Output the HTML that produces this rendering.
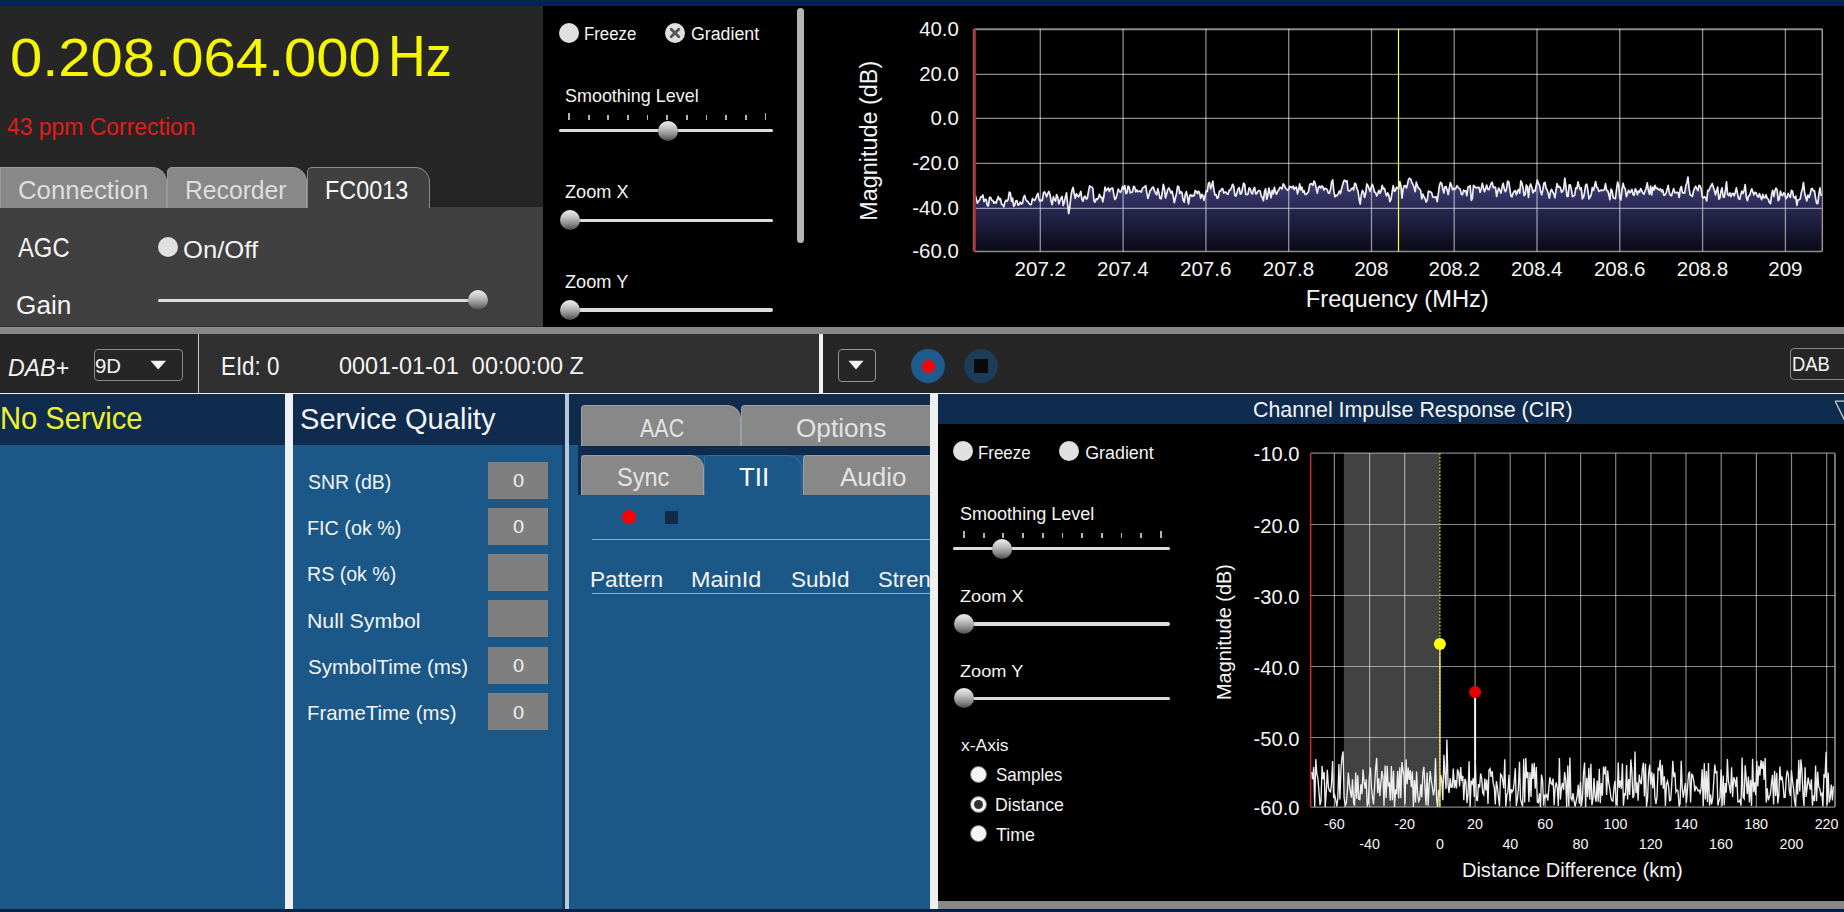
<!DOCTYPE html>
<html><head><meta charset="utf-8"><style>
html,body{margin:0;padding:0;}
body{width:1844px;height:912px;position:relative;overflow:hidden;background:#000;font-family:"Liberation Sans", sans-serif;}
.t{position:absolute;white-space:nowrap;line-height:1;transform-origin:0 0;}
.r{position:absolute;box-sizing:content-box;}
</style></head><body>
<div class="r" style="left:0px;top:0px;width:1844px;height:6px;background:#012258;"></div>
<div class="r" style="left:0px;top:0px;width:1844px;height:2px;background:#04283c;"></div>
<div class="r" style="left:0px;top:6px;width:543px;height:320px;background:#262626;"></div>
<div class="r" style="left:543px;top:6px;width:1301px;height:321px;background:#000;"></div>
<div class="r" style="left:0px;top:326px;width:543px;height:1px;background:#333;"></div>
<div class="r" style="left:0px;top:327px;width:1844px;height:7px;background:#888;"></div>
<div class="r" style="left:0px;top:334px;width:198px;height:59px;background:#262626;"></div>
<div class="r" style="left:198px;top:334px;width:621px;height:59px;background:#303030;"></div>
<div class="r" style="left:823px;top:334px;width:1021px;height:59px;background:#262626;"></div>
<div class="r" style="left:198px;top:334px;width:1px;height:59px;background:#c8c8c8;"></div>
<div class="r" style="left:819px;top:334px;width:4px;height:59px;background:#f0f0f0;"></div>
<div class="r" style="left:0px;top:393px;width:1844px;height:1px;background:#e6eef6;"></div>
<div class="r" style="left:0px;top:394px;width:1844px;height:518px;background:#1b5887;"></div>
<div class="r" style="left:0px;top:394px;width:285px;height:51px;background:#0f2b4e;"></div>
<div class="r" style="left:293px;top:394px;width:272px;height:51px;background:#0f2b4e;"></div>
<div class="r" style="left:285px;top:394px;width:8px;height:515px;background:#eef0f4;"></div>
<div class="r" style="left:562px;top:445px;width:3px;height:464px;background:#123a60;"></div>
<div class="r" style="left:565px;top:394px;width:4px;height:515px;background:#b8c8d8;"></div>
<div class="r" style="left:930px;top:394px;width:8px;height:515px;background:#eef0f0;"></div>
<div class="r" style="left:569px;top:394px;width:361px;height:61px;background:#0f2b4e;"></div>
<div class="r" style="left:569px;top:445px;width:9px;height:50px;background:#1b5887;"></div>
<div class="r" style="left:578px;top:455px;width:3px;height:40px;background:#0f2b4e;"></div>
<div class="r" style="left:938px;top:394px;width:906px;height:30px;background:#0f2b4e;"></div>
<div class="r" style="left:938px;top:424px;width:906px;height:477px;background:#000;"></div>
<div class="r" style="left:938px;top:901px;width:906px;height:8px;background:#888;"></div>
<div class="r" style="left:0px;top:909px;width:1844px;height:3px;background:#032346;"></div>
<div class="t" style="left:10.26px;top:31.19px;font-size:54.47px;color:#f6f600;transform:scaleX(1.0646);">0.208.064.000</div>
<div class="t" style="left:388.33px;top:29.32px;font-size:56.69px;color:#f6f600;transform:scaleX(0.9203);">Hz</div>
<div class="t" style="left:7.44px;top:116.20px;font-size:23.74px;color:#e41b1b;transform:scaleX(0.9654);">43 ppm Correction</div>
<div class="r" style="left:0px;top:207px;width:543px;height:119px;background:#404040;"></div>
<div class="r" style="left:428px;top:201px;width:115px;height:6px;background:#232323;"></div>
<div class="r" style="left:0px;top:167px;width:164.5px;height:40px;background:#888888;border:1px solid #9a9a9a;border-bottom:none;border-radius:0px 15px 0 0;"></div>
<div class="r" style="left:167px;top:167px;width:137.5px;height:40px;background:#888888;border:1px solid #9a9a9a;border-bottom:none;border-radius:5px 15px 0 0;"></div>
<div class="r" style="left:307px;top:167px;width:120.5px;height:40px;background:#404040;border:1px solid #8a8a8a;border-bottom:none;border-radius:5px 15px 0 0;"></div>
<div class="t" style="left:17.71px;top:177.01px;font-size:26.57px;color:#dedede;transform:scaleX(0.9703);">Connection</div>
<div class="t" style="left:185.42px;top:178.12px;font-size:25.14px;color:#dedede;transform:scaleX(0.9825);">Recorder</div>
<div class="t" style="left:325.43px;top:178.12px;font-size:25.14px;color:#f8f8f8;transform:scaleX(0.9303);">FC0013</div>
<div class="t" style="left:17.50px;top:234.77px;font-size:26.86px;color:#f4f4f4;transform:scaleX(0.8860);">AGC</div>
<div class="r" style="left:158.0px;top:236.5px;width:20px;height:20px;border-radius:50%;background:#e0e0e0;"></div>
<div class="t" style="left:182.97px;top:237.80px;font-size:23.86px;color:#f4f4f4;transform:scaleX(1.0750);">On/Off</div>
<div class="t" style="left:16.19px;top:292.41px;font-size:26.57px;color:#f4f4f4;transform:scaleX(0.9867);">Gain</div>
<div class="r" style="left:158px;top:298.6px;width:312px;height:3.5px;border-radius:2px;background:#dcdcdc;"></div>
<div class="r" style="left:467.5px;top:290.3px;width:20px;height:20px;border-radius:50%;background:linear-gradient(180deg, #eeeeee 0%, #c4c4c4 35%, #8a8a8a 70%, #4a4a4a 100%);box-shadow:0 0 1px rgba(0,0,0,.8);"></div>
<div class="r" style="left:558.5px;top:23.1px;width:20px;height:20px;border-radius:50%;background:#e0e0e0;"></div>
<div class="t" style="left:583.56px;top:25.26px;font-size:18.00px;color:#f4f4f4;transform:scaleX(0.9327);">Freeze</div>
<div class="r" style="left:665.0px;top:23.0px;width:20px;height:20px;border-radius:50%;background:#e0e0e0;"></div>
<svg class="r" style="left:668px;top:26px" width="14" height="14" viewBox="0 0 14 14"><path d="M3.2 3.2 L10.8 10.8 M10.8 3.2 L3.2 10.8" stroke="#555" stroke-width="2.8" stroke-linecap="round"/></svg>
<div class="t" style="left:690.71px;top:25.26px;font-size:18.00px;color:#f4f4f4;transform:scaleX(0.9871);">Gradient</div>
<div class="t" style="left:565.28px;top:87.80px;font-size:17.71px;color:#f4f4f4;transform:scaleX(1.0142);">Smoothing Level</div>
<div class="r" style="left:568.05px;top:113px;width:1.8px;height:7px;background:#b4b4b4;"></div>
<div class="r" style="left:587.71px;top:114.5px;width:1.8px;height:5.5px;background:#b4b4b4;"></div>
<div class="r" style="left:607.37px;top:114.5px;width:1.8px;height:5.5px;background:#b4b4b4;"></div>
<div class="r" style="left:627.03px;top:114.5px;width:1.8px;height:5.5px;background:#b4b4b4;"></div>
<div class="r" style="left:646.69px;top:114.5px;width:1.8px;height:5.5px;background:#b4b4b4;"></div>
<div class="r" style="left:666.35px;top:114.5px;width:1.8px;height:5.5px;background:#b4b4b4;"></div>
<div class="r" style="left:686.01px;top:114.5px;width:1.8px;height:5.5px;background:#b4b4b4;"></div>
<div class="r" style="left:705.67px;top:114.5px;width:1.8px;height:5.5px;background:#b4b4b4;"></div>
<div class="r" style="left:725.33px;top:114.5px;width:1.8px;height:5.5px;background:#b4b4b4;"></div>
<div class="r" style="left:744.99px;top:114.5px;width:1.8px;height:5.5px;background:#b4b4b4;"></div>
<div class="r" style="left:764.65px;top:113px;width:1.8px;height:7px;background:#b4b4b4;"></div>
<div class="r" style="left:559px;top:128.8px;width:214px;height:3.5px;border-radius:2px;background:#dcdcdc;"></div>
<div class="r" style="left:657.5px;top:121.0px;width:20px;height:20px;border-radius:50%;background:linear-gradient(180deg, #eeeeee 0%, #c4c4c4 35%, #8a8a8a 70%, #4a4a4a 100%);box-shadow:0 0 1px rgba(0,0,0,.8);"></div>
<div class="t" style="left:565.45px;top:183.08px;font-size:18.57px;color:#f4f4f4;transform:scaleX(0.9790);">Zoom X</div>
<div class="r" style="left:560.5px;top:218.7px;width:212.5px;height:3.5px;border-radius:2px;background:#dcdcdc;"></div>
<div class="r" style="left:559.6px;top:210.4px;width:20px;height:20px;border-radius:50%;background:linear-gradient(180deg, #eeeeee 0%, #c4c4c4 35%, #8a8a8a 70%, #4a4a4a 100%);box-shadow:0 0 1px rgba(0,0,0,.8);"></div>
<div class="t" style="left:565.45px;top:272.68px;font-size:18.57px;color:#f4f4f4;transform:scaleX(0.9790);">Zoom Y</div>
<div class="r" style="left:560.5px;top:308.2px;width:212.5px;height:3.5px;border-radius:2px;background:#dcdcdc;"></div>
<div class="r" style="left:559.6px;top:300.0px;width:20px;height:20px;border-radius:50%;background:linear-gradient(180deg, #eeeeee 0%, #c4c4c4 35%, #8a8a8a 70%, #4a4a4a 100%);box-shadow:0 0 1px rgba(0,0,0,.8);"></div>
<div class="r" style="left:797px;top:8px;width:7px;height:235px;background:#b4b4b4;border-radius:4px;"></div>
<svg class="r" style="left:0;top:0" width="1844" height="340" viewBox="0 0 1844 340"><defs><linearGradient id="sg" x1="0" y1="0" x2="0" y2="1" gradientUnits="objectBoundingBox"><stop offset="0" stop-color="#44447a"/><stop offset="0.45" stop-color="#262650"/><stop offset="1" stop-color="#0a0a16"/></linearGradient></defs><path d="M975.2 251.4 L975.2 195.1 L976.3 199.1 L977.4 203.2 L978.5 201.3 L979.6 200.0 L980.7 196.8 L981.8 197.1 L982.9 194.9 L984.0 201.6 L985.1 199.3 L986.2 199.5 L987.3 205.7 L988.4 206.0 L989.5 197.4 L990.6 197.3 L991.7 200.3 L992.8 200.4 L993.9 203.1 L995.0 201.8 L996.1 203.2 L997.2 199.6 L998.3 196.6 L999.4 199.8 L1000.5 198.7 L1001.6 204.3 L1002.7 204.8 L1003.8 206.8 L1004.9 202.2 L1006.0 200.2 L1007.1 201.3 L1008.2 199.5 L1009.3 192.2 L1010.4 193.0 L1011.5 201.4 L1012.6 198.1 L1013.7 206.3 L1014.8 205.1 L1015.9 200.8 L1017.0 200.7 L1018.1 205.2 L1019.2 204.5 L1020.3 202.1 L1021.4 204.0 L1022.5 203.3 L1023.6 197.1 L1024.7 195.4 L1025.8 199.6 L1026.9 201.0 L1028.0 201.8 L1029.1 203.6 L1030.2 204.6 L1031.3 204.5 L1032.4 198.7 L1033.5 199.8 L1034.6 200.5 L1035.7 198.5 L1036.8 195.5 L1037.9 193.3 L1039.0 199.5 L1040.1 201.4 L1041.2 200.0 L1042.3 200.7 L1043.4 193.1 L1044.5 191.9 L1045.6 194.1 L1046.7 196.8 L1047.8 193.4 L1048.9 191.5 L1050.0 194.7 L1051.1 200.9 L1052.2 204.7 L1053.3 196.9 L1054.4 199.6 L1055.5 201.1 L1056.6 194.7 L1057.7 197.2 L1058.8 203.9 L1059.9 200.8 L1061.0 198.1 L1062.1 196.4 L1063.2 205.4 L1064.3 202.2 L1065.4 196.9 L1066.5 192.9 L1067.6 204.3 L1068.7 213.6 L1069.8 206.8 L1070.9 196.7 L1072.0 190.5 L1073.1 187.4 L1074.2 193.5 L1075.3 198.4 L1076.4 193.8 L1077.5 195.4 L1078.6 196.8 L1079.7 194.6 L1080.8 191.4 L1081.9 199.4 L1083.0 201.2 L1084.1 197.0 L1085.2 196.2 L1086.3 199.0 L1087.4 198.2 L1088.5 191.3 L1089.6 185.8 L1090.7 186.8 L1091.8 187.0 L1092.9 188.7 L1094.0 201.3 L1095.1 202.1 L1096.2 198.7 L1097.3 199.5 L1098.4 197.7 L1099.5 194.2 L1100.6 197.3 L1101.7 197.2 L1102.8 201.8 L1103.9 196.0 L1105.0 187.0 L1106.1 190.8 L1107.2 189.2 L1108.3 188.0 L1109.4 191.4 L1110.5 188.9 L1111.6 188.3 L1112.7 188.0 L1113.8 194.6 L1114.9 199.5 L1116.0 197.9 L1117.1 193.9 L1118.2 189.2 L1119.3 191.0 L1120.4 192.4 L1121.5 190.1 L1122.6 186.4 L1123.7 189.2 L1124.8 185.6 L1125.9 193.7 L1127.0 192.8 L1128.1 186.0 L1129.2 187.3 L1130.3 192.9 L1131.4 192.3 L1132.5 191.9 L1133.6 186.3 L1134.7 187.1 L1135.8 191.9 L1136.9 189.9 L1138.0 191.7 L1139.1 191.2 L1140.2 191.1 L1141.3 192.1 L1142.4 188.5 L1143.5 187.4 L1144.6 186.8 L1145.7 185.7 L1146.8 192.7 L1147.9 198.4 L1149.0 194.7 L1150.1 190.5 L1151.2 189.6 L1152.3 187.3 L1153.4 187.0 L1154.5 190.9 L1155.6 193.2 L1156.7 194.8 L1157.8 188.6 L1158.9 192.9 L1160.0 198.4 L1161.1 198.8 L1162.2 193.0 L1163.3 184.3 L1164.4 188.5 L1165.5 197.9 L1166.6 194.0 L1167.7 189.6 L1168.8 187.9 L1169.9 190.0 L1171.0 193.1 L1172.1 191.2 L1173.2 196.2 L1174.3 202.7 L1175.4 198.0 L1176.5 193.5 L1177.6 186.2 L1178.7 186.7 L1179.8 193.6 L1180.9 191.5 L1182.0 192.6 L1183.1 200.1 L1184.2 202.2 L1185.3 194.2 L1186.4 191.6 L1187.5 197.3 L1188.6 204.0 L1189.7 195.6 L1190.8 194.8 L1191.9 196.4 L1193.0 195.2 L1194.1 195.8 L1195.2 190.5 L1196.3 191.4 L1197.4 193.7 L1198.5 191.2 L1199.6 193.0 L1200.7 198.3 L1201.8 194.4 L1202.9 195.6 L1204.0 200.3 L1205.1 195.8 L1206.2 190.9 L1207.3 191.4 L1208.4 183.6 L1209.5 182.3 L1210.6 188.8 L1211.7 185.8 L1212.8 181.1 L1213.9 190.1 L1215.0 195.0 L1216.1 194.7 L1217.2 198.3 L1218.3 197.4 L1219.4 191.2 L1220.5 191.1 L1221.6 189.0 L1222.7 188.6 L1223.8 193.1 L1224.9 192.2 L1226.0 192.1 L1227.1 194.2 L1228.2 194.1 L1229.3 190.1 L1230.4 189.9 L1231.5 187.7 L1232.6 184.3 L1233.7 186.2 L1234.8 195.1 L1235.9 196.2 L1237.0 192.7 L1238.1 189.0 L1239.2 187.6 L1240.3 194.1 L1241.4 193.5 L1242.5 188.5 L1243.6 183.2 L1244.7 184.4 L1245.8 194.4 L1246.9 194.7 L1248.0 194.0 L1249.1 187.9 L1250.2 188.8 L1251.3 192.9 L1252.4 194.0 L1253.5 189.1 L1254.6 187.4 L1255.7 193.8 L1256.8 193.7 L1257.9 191.2 L1259.0 190.4 L1260.1 191.0 L1261.2 195.9 L1262.3 197.5 L1263.4 200.7 L1264.5 191.9 L1265.6 188.8 L1266.7 199.2 L1267.8 195.2 L1268.9 188.0 L1270.0 192.8 L1271.1 197.7 L1272.2 190.3 L1273.3 193.8 L1274.4 187.3 L1275.5 192.2 L1276.6 194.3 L1277.7 191.3 L1278.8 189.9 L1279.9 187.4 L1281.0 187.8 L1282.1 188.8 L1283.2 183.9 L1284.3 185.0 L1285.4 187.9 L1286.5 189.0 L1287.6 190.2 L1288.7 189.4 L1289.8 186.3 L1290.9 186.7 L1292.0 187.9 L1293.1 186.1 L1294.2 189.6 L1295.3 187.6 L1296.4 187.1 L1297.5 193.8 L1298.6 189.8 L1299.7 183.9 L1300.8 190.0 L1301.9 187.1 L1303.0 192.4 L1304.1 190.7 L1305.2 194.5 L1306.3 194.3 L1307.4 193.0 L1308.5 191.6 L1309.6 185.1 L1310.7 183.6 L1311.8 184.1 L1312.9 185.3 L1314.0 181.0 L1315.1 183.0 L1316.2 188.4 L1317.3 193.1 L1318.4 187.4 L1319.5 186.2 L1320.6 188.1 L1321.7 186.0 L1322.8 186.5 L1323.9 190.1 L1325.0 188.3 L1326.1 188.6 L1327.2 189.6 L1328.3 192.9 L1329.4 193.3 L1330.5 189.5 L1331.6 182.1 L1332.7 179.8 L1333.8 191.2 L1334.9 196.9 L1336.0 195.1 L1337.1 195.8 L1338.2 193.5 L1339.3 191.0 L1340.4 193.7 L1341.5 188.8 L1342.6 185.0 L1343.7 181.2 L1344.8 180.2 L1345.9 181.6 L1347.0 180.8 L1348.1 190.5 L1349.2 191.0 L1350.3 190.4 L1351.4 188.8 L1352.5 187.8 L1353.6 189.9 L1354.7 183.4 L1355.8 183.8 L1356.9 188.5 L1358.0 191.1 L1359.1 199.0 L1360.2 204.1 L1361.3 195.0 L1362.4 190.4 L1363.5 192.1 L1364.6 197.5 L1365.7 193.3 L1366.8 183.9 L1367.9 185.5 L1369.0 188.4 L1370.1 191.4 L1371.2 187.3 L1372.3 184.3 L1373.4 187.5 L1374.5 192.2 L1375.6 192.4 L1376.7 195.9 L1377.8 193.8 L1378.9 190.3 L1380.0 193.2 L1381.1 190.8 L1382.2 185.3 L1383.3 188.9 L1384.4 188.3 L1385.5 192.7 L1386.6 195.9 L1387.7 192.9 L1388.8 195.0 L1389.9 201.7 L1391.0 199.4 L1392.1 192.1 L1393.2 185.6 L1394.3 191.3 L1395.4 190.5 L1396.5 187.2 L1397.6 188.3 L1398.7 188.9 L1399.8 181.6 L1400.9 185.4 L1402.0 198.2 L1403.1 189.0 L1404.2 185.9 L1405.3 185.7 L1406.4 188.0 L1407.5 184.3 L1408.6 179.1 L1409.7 178.3 L1410.8 179.3 L1411.9 182.7 L1413.0 184.5 L1414.1 187.5 L1415.2 191.7 L1416.3 182.2 L1417.4 185.9 L1418.5 188.3 L1419.6 188.8 L1420.7 190.8 L1421.8 198.8 L1422.9 194.1 L1424.0 197.0 L1425.1 198.8 L1426.2 202.2 L1427.3 199.9 L1428.4 191.0 L1429.5 192.0 L1430.6 191.7 L1431.7 193.0 L1432.8 196.9 L1433.9 197.1 L1435.0 197.5 L1436.1 196.6 L1437.2 201.6 L1438.3 194.1 L1439.4 185.7 L1440.5 182.4 L1441.6 183.1 L1442.7 188.1 L1443.8 193.0 L1444.9 186.9 L1446.0 186.5 L1447.1 189.9 L1448.2 194.5 L1449.3 188.1 L1450.4 182.5 L1451.5 185.6 L1452.6 189.8 L1453.7 188.1 L1454.8 189.5 L1455.9 188.4 L1457.0 185.7 L1458.1 187.2 L1459.2 188.4 L1460.3 189.4 L1461.4 194.4 L1462.5 194.6 L1463.6 190.1 L1464.7 191.6 L1465.8 190.8 L1466.9 195.7 L1468.0 187.0 L1469.1 186.6 L1470.2 185.6 L1471.3 200.3 L1472.4 198.1 L1473.5 185.3 L1474.6 186.3 L1475.7 187.6 L1476.8 187.8 L1477.9 187.4 L1479.0 187.4 L1480.1 192.3 L1481.2 189.0 L1482.3 183.3 L1483.4 187.7 L1484.5 191.7 L1485.6 188.5 L1486.7 185.1 L1487.8 189.2 L1488.9 189.7 L1490.0 186.7 L1491.1 183.6 L1492.2 182.2 L1493.3 187.7 L1494.4 187.0 L1495.5 187.3 L1496.6 196.5 L1497.7 191.1 L1498.8 188.0 L1499.9 190.9 L1501.0 193.1 L1502.1 186.8 L1503.2 183.3 L1504.3 189.0 L1505.4 191.6 L1506.5 188.8 L1507.6 181.2 L1508.7 181.7 L1509.8 188.5 L1510.9 195.8 L1512.0 196.8 L1513.1 193.1 L1514.2 191.2 L1515.3 190.7 L1516.4 194.8 L1517.5 191.0 L1518.6 189.4 L1519.7 193.2 L1520.8 180.8 L1521.9 183.2 L1523.0 187.8 L1524.1 195.6 L1525.2 194.3 L1526.3 185.0 L1527.4 187.2 L1528.5 197.4 L1529.6 186.7 L1530.7 184.0 L1531.8 187.2 L1532.9 192.9 L1534.0 190.4 L1535.1 191.0 L1536.2 185.5 L1537.3 180.0 L1538.4 183.3 L1539.5 185.2 L1540.6 191.4 L1541.7 194.8 L1542.8 189.7 L1543.9 183.3 L1545.0 182.5 L1546.1 188.3 L1547.2 189.9 L1548.3 194.0 L1549.4 198.2 L1550.5 191.7 L1551.6 189.3 L1552.7 192.0 L1553.8 193.7 L1554.9 197.9 L1556.0 190.1 L1557.1 183.6 L1558.2 187.2 L1559.3 186.5 L1560.4 187.8 L1561.5 192.3 L1562.6 191.1 L1563.7 189.3 L1564.8 178.0 L1565.9 186.7 L1567.0 196.3 L1568.1 196.3 L1569.2 184.9 L1570.3 184.9 L1571.4 189.5 L1572.5 196.6 L1573.6 196.1 L1574.7 195.2 L1575.8 187.9 L1576.9 188.5 L1578.0 181.9 L1579.1 186.0 L1580.2 189.6 L1581.3 187.8 L1582.4 198.8 L1583.5 197.3 L1584.6 192.2 L1585.7 185.0 L1586.8 184.2 L1587.9 190.1 L1589.0 198.9 L1590.1 197.0 L1591.2 194.9 L1592.3 187.6 L1593.4 190.4 L1594.5 186.4 L1595.6 181.6 L1596.7 187.3 L1597.8 187.9 L1598.9 191.4 L1600.0 190.7 L1601.1 190.1 L1602.2 190.3 L1603.3 190.4 L1604.4 189.4 L1605.5 183.6 L1606.6 190.5 L1607.7 190.6 L1608.8 194.6 L1609.9 199.7 L1611.0 189.2 L1612.1 190.6 L1613.2 197.7 L1614.3 198.2 L1615.4 198.6 L1616.5 189.6 L1617.6 182.0 L1618.7 185.3 L1619.8 197.7 L1620.9 200.0 L1622.0 189.1 L1623.1 183.3 L1624.2 187.7 L1625.3 188.8 L1626.4 196.6 L1627.5 193.4 L1628.6 190.2 L1629.7 192.7 L1630.8 191.8 L1631.9 189.3 L1633.0 194.4 L1634.1 195.3 L1635.2 188.8 L1636.3 190.4 L1637.4 194.7 L1638.5 191.0 L1639.6 192.1 L1640.7 188.6 L1641.8 190.6 L1642.9 193.1 L1644.0 194.3 L1645.1 191.0 L1646.2 188.0 L1647.3 182.8 L1648.4 190.5 L1649.5 194.3 L1650.6 186.2 L1651.7 194.9 L1652.8 187.0 L1653.9 190.1 L1655.0 185.4 L1656.1 188.5 L1657.2 188.2 L1658.3 189.3 L1659.4 190.0 L1660.5 188.8 L1661.6 191.6 L1662.7 190.0 L1663.8 195.1 L1664.9 195.2 L1666.0 193.2 L1667.1 189.4 L1668.2 185.4 L1669.3 192.7 L1670.4 195.5 L1671.5 195.7 L1672.6 191.7 L1673.7 188.6 L1674.8 192.7 L1675.9 192.6 L1677.0 192.4 L1678.1 192.6 L1679.2 197.5 L1680.3 188.6 L1681.4 186.4 L1682.5 192.9 L1683.6 192.9 L1684.7 193.1 L1685.8 186.0 L1686.9 182.5 L1688.0 177.0 L1689.1 188.7 L1690.2 195.0 L1691.3 195.4 L1692.4 196.5 L1693.5 191.0 L1694.6 188.1 L1695.7 186.3 L1696.8 188.6 L1697.9 190.7 L1699.0 185.3 L1700.1 186.0 L1701.2 188.8 L1702.3 196.8 L1703.4 197.9 L1704.5 196.6 L1705.6 197.8 L1706.7 200.9 L1707.8 190.3 L1708.9 190.6 L1710.0 187.8 L1711.1 185.6 L1712.2 183.6 L1713.3 186.9 L1714.4 190.4 L1715.5 194.9 L1716.6 190.8 L1717.7 187.1 L1718.8 199.1 L1719.9 198.1 L1721.0 191.1 L1722.1 187.9 L1723.2 197.0 L1724.3 197.3 L1725.4 190.3 L1726.5 181.8 L1727.6 194.5 L1728.7 195.6 L1729.8 192.8 L1730.9 196.6 L1732.0 193.7 L1733.1 193.3 L1734.2 195.8 L1735.3 192.2 L1736.4 187.8 L1737.5 193.6 L1738.6 198.8 L1739.7 199.3 L1740.8 194.6 L1741.9 191.0 L1743.0 193.5 L1744.1 190.5 L1745.2 184.5 L1746.3 196.9 L1747.4 200.7 L1748.5 196.0 L1749.6 195.5 L1750.7 191.6 L1751.8 188.9 L1752.9 192.2 L1754.0 194.8 L1755.1 192.4 L1756.2 192.7 L1757.3 196.0 L1758.4 197.1 L1759.5 193.6 L1760.6 197.2 L1761.7 199.7 L1762.8 194.4 L1763.9 197.6 L1765.0 197.7 L1766.1 194.7 L1767.2 198.4 L1768.3 199.1 L1769.4 202.7 L1770.5 203.6 L1771.6 194.9 L1772.7 190.3 L1773.8 196.5 L1774.9 190.8 L1776.0 188.1 L1777.1 189.9 L1778.2 200.6 L1779.3 199.2 L1780.4 191.1 L1781.5 194.8 L1782.6 195.7 L1783.7 192.8 L1784.8 193.7 L1785.9 198.6 L1787.0 197.5 L1788.1 193.4 L1789.2 195.4 L1790.3 197.4 L1791.4 190.3 L1792.5 191.2 L1793.6 197.1 L1794.7 198.0 L1795.8 196.1 L1796.9 205.4 L1798.0 199.8 L1799.1 199.7 L1800.2 198.9 L1801.3 192.6 L1802.4 189.3 L1803.5 182.5 L1804.6 192.6 L1805.7 197.1 L1806.8 200.9 L1807.9 195.0 L1809.0 197.4 L1810.1 194.4 L1811.2 189.1 L1812.3 188.5 L1813.4 191.0 L1814.5 190.9 L1815.6 198.2 L1816.7 203.5 L1817.8 203.7 L1818.9 193.7 L1820.0 187.9 L1821.1 196.0 L1821.1 251.4 Z" fill="url(#sg)"/><line x1="974.2" y1="29.3" x2="1822.3" y2="29.3" stroke="rgba(255,255,255,0.54)" stroke-width="1.9"/><line x1="974.2" y1="74.4" x2="1822.3" y2="74.4" stroke="rgba(255,255,255,0.54)" stroke-width="1.3"/><line x1="974.2" y1="118.4" x2="1822.3" y2="118.4" stroke="rgba(255,255,255,0.54)" stroke-width="1.3"/><line x1="974.2" y1="163.4" x2="1822.3" y2="163.4" stroke="rgba(255,255,255,0.54)" stroke-width="1.3"/><line x1="974.2" y1="208.3" x2="1822.3" y2="208.3" stroke="rgba(255,255,255,0.54)" stroke-width="1.3"/><line x1="974.2" y1="251.5" x2="1822.3" y2="251.5" stroke="rgba(255,255,255,0.54)" stroke-width="1.3"/><line x1="1040.3" y1="29.0" x2="1040.3" y2="251.4" stroke="rgba(255,255,255,0.54)" stroke-width="1.3"/><line x1="1123.1" y1="29.0" x2="1123.1" y2="251.4" stroke="rgba(255,255,255,0.54)" stroke-width="1.3"/><line x1="1205.9" y1="29.0" x2="1205.9" y2="251.4" stroke="rgba(255,255,255,0.54)" stroke-width="1.3"/><line x1="1288.7" y1="29.0" x2="1288.7" y2="251.4" stroke="rgba(255,255,255,0.54)" stroke-width="1.3"/><line x1="1371.5" y1="29.0" x2="1371.5" y2="251.4" stroke="rgba(255,255,255,0.54)" stroke-width="1.3"/><line x1="1454.2" y1="29.0" x2="1454.2" y2="251.4" stroke="rgba(255,255,255,0.54)" stroke-width="1.3"/><line x1="1537.0" y1="29.0" x2="1537.0" y2="251.4" stroke="rgba(255,255,255,0.54)" stroke-width="1.3"/><line x1="1619.8" y1="29.0" x2="1619.8" y2="251.4" stroke="rgba(255,255,255,0.54)" stroke-width="1.3"/><line x1="1702.6" y1="29.0" x2="1702.6" y2="251.4" stroke="rgba(255,255,255,0.54)" stroke-width="1.3"/><line x1="1785.4" y1="29.0" x2="1785.4" y2="251.4" stroke="rgba(255,255,255,0.54)" stroke-width="1.3"/><line x1="1822.3" y1="29.0" x2="1822.3" y2="251.4" stroke="#9a9a9a" stroke-width="1.5"/><path d="M975.2 195.1 L976.3 199.1 L977.4 203.2 L978.5 201.3 L979.6 200.0 L980.7 196.8 L981.8 197.1 L982.9 194.9 L984.0 201.6 L985.1 199.3 L986.2 199.5 L987.3 205.7 L988.4 206.0 L989.5 197.4 L990.6 197.3 L991.7 200.3 L992.8 200.4 L993.9 203.1 L995.0 201.8 L996.1 203.2 L997.2 199.6 L998.3 196.6 L999.4 199.8 L1000.5 198.7 L1001.6 204.3 L1002.7 204.8 L1003.8 206.8 L1004.9 202.2 L1006.0 200.2 L1007.1 201.3 L1008.2 199.5 L1009.3 192.2 L1010.4 193.0 L1011.5 201.4 L1012.6 198.1 L1013.7 206.3 L1014.8 205.1 L1015.9 200.8 L1017.0 200.7 L1018.1 205.2 L1019.2 204.5 L1020.3 202.1 L1021.4 204.0 L1022.5 203.3 L1023.6 197.1 L1024.7 195.4 L1025.8 199.6 L1026.9 201.0 L1028.0 201.8 L1029.1 203.6 L1030.2 204.6 L1031.3 204.5 L1032.4 198.7 L1033.5 199.8 L1034.6 200.5 L1035.7 198.5 L1036.8 195.5 L1037.9 193.3 L1039.0 199.5 L1040.1 201.4 L1041.2 200.0 L1042.3 200.7 L1043.4 193.1 L1044.5 191.9 L1045.6 194.1 L1046.7 196.8 L1047.8 193.4 L1048.9 191.5 L1050.0 194.7 L1051.1 200.9 L1052.2 204.7 L1053.3 196.9 L1054.4 199.6 L1055.5 201.1 L1056.6 194.7 L1057.7 197.2 L1058.8 203.9 L1059.9 200.8 L1061.0 198.1 L1062.1 196.4 L1063.2 205.4 L1064.3 202.2 L1065.4 196.9 L1066.5 192.9 L1067.6 204.3 L1068.7 213.6 L1069.8 206.8 L1070.9 196.7 L1072.0 190.5 L1073.1 187.4 L1074.2 193.5 L1075.3 198.4 L1076.4 193.8 L1077.5 195.4 L1078.6 196.8 L1079.7 194.6 L1080.8 191.4 L1081.9 199.4 L1083.0 201.2 L1084.1 197.0 L1085.2 196.2 L1086.3 199.0 L1087.4 198.2 L1088.5 191.3 L1089.6 185.8 L1090.7 186.8 L1091.8 187.0 L1092.9 188.7 L1094.0 201.3 L1095.1 202.1 L1096.2 198.7 L1097.3 199.5 L1098.4 197.7 L1099.5 194.2 L1100.6 197.3 L1101.7 197.2 L1102.8 201.8 L1103.9 196.0 L1105.0 187.0 L1106.1 190.8 L1107.2 189.2 L1108.3 188.0 L1109.4 191.4 L1110.5 188.9 L1111.6 188.3 L1112.7 188.0 L1113.8 194.6 L1114.9 199.5 L1116.0 197.9 L1117.1 193.9 L1118.2 189.2 L1119.3 191.0 L1120.4 192.4 L1121.5 190.1 L1122.6 186.4 L1123.7 189.2 L1124.8 185.6 L1125.9 193.7 L1127.0 192.8 L1128.1 186.0 L1129.2 187.3 L1130.3 192.9 L1131.4 192.3 L1132.5 191.9 L1133.6 186.3 L1134.7 187.1 L1135.8 191.9 L1136.9 189.9 L1138.0 191.7 L1139.1 191.2 L1140.2 191.1 L1141.3 192.1 L1142.4 188.5 L1143.5 187.4 L1144.6 186.8 L1145.7 185.7 L1146.8 192.7 L1147.9 198.4 L1149.0 194.7 L1150.1 190.5 L1151.2 189.6 L1152.3 187.3 L1153.4 187.0 L1154.5 190.9 L1155.6 193.2 L1156.7 194.8 L1157.8 188.6 L1158.9 192.9 L1160.0 198.4 L1161.1 198.8 L1162.2 193.0 L1163.3 184.3 L1164.4 188.5 L1165.5 197.9 L1166.6 194.0 L1167.7 189.6 L1168.8 187.9 L1169.9 190.0 L1171.0 193.1 L1172.1 191.2 L1173.2 196.2 L1174.3 202.7 L1175.4 198.0 L1176.5 193.5 L1177.6 186.2 L1178.7 186.7 L1179.8 193.6 L1180.9 191.5 L1182.0 192.6 L1183.1 200.1 L1184.2 202.2 L1185.3 194.2 L1186.4 191.6 L1187.5 197.3 L1188.6 204.0 L1189.7 195.6 L1190.8 194.8 L1191.9 196.4 L1193.0 195.2 L1194.1 195.8 L1195.2 190.5 L1196.3 191.4 L1197.4 193.7 L1198.5 191.2 L1199.6 193.0 L1200.7 198.3 L1201.8 194.4 L1202.9 195.6 L1204.0 200.3 L1205.1 195.8 L1206.2 190.9 L1207.3 191.4 L1208.4 183.6 L1209.5 182.3 L1210.6 188.8 L1211.7 185.8 L1212.8 181.1 L1213.9 190.1 L1215.0 195.0 L1216.1 194.7 L1217.2 198.3 L1218.3 197.4 L1219.4 191.2 L1220.5 191.1 L1221.6 189.0 L1222.7 188.6 L1223.8 193.1 L1224.9 192.2 L1226.0 192.1 L1227.1 194.2 L1228.2 194.1 L1229.3 190.1 L1230.4 189.9 L1231.5 187.7 L1232.6 184.3 L1233.7 186.2 L1234.8 195.1 L1235.9 196.2 L1237.0 192.7 L1238.1 189.0 L1239.2 187.6 L1240.3 194.1 L1241.4 193.5 L1242.5 188.5 L1243.6 183.2 L1244.7 184.4 L1245.8 194.4 L1246.9 194.7 L1248.0 194.0 L1249.1 187.9 L1250.2 188.8 L1251.3 192.9 L1252.4 194.0 L1253.5 189.1 L1254.6 187.4 L1255.7 193.8 L1256.8 193.7 L1257.9 191.2 L1259.0 190.4 L1260.1 191.0 L1261.2 195.9 L1262.3 197.5 L1263.4 200.7 L1264.5 191.9 L1265.6 188.8 L1266.7 199.2 L1267.8 195.2 L1268.9 188.0 L1270.0 192.8 L1271.1 197.7 L1272.2 190.3 L1273.3 193.8 L1274.4 187.3 L1275.5 192.2 L1276.6 194.3 L1277.7 191.3 L1278.8 189.9 L1279.9 187.4 L1281.0 187.8 L1282.1 188.8 L1283.2 183.9 L1284.3 185.0 L1285.4 187.9 L1286.5 189.0 L1287.6 190.2 L1288.7 189.4 L1289.8 186.3 L1290.9 186.7 L1292.0 187.9 L1293.1 186.1 L1294.2 189.6 L1295.3 187.6 L1296.4 187.1 L1297.5 193.8 L1298.6 189.8 L1299.7 183.9 L1300.8 190.0 L1301.9 187.1 L1303.0 192.4 L1304.1 190.7 L1305.2 194.5 L1306.3 194.3 L1307.4 193.0 L1308.5 191.6 L1309.6 185.1 L1310.7 183.6 L1311.8 184.1 L1312.9 185.3 L1314.0 181.0 L1315.1 183.0 L1316.2 188.4 L1317.3 193.1 L1318.4 187.4 L1319.5 186.2 L1320.6 188.1 L1321.7 186.0 L1322.8 186.5 L1323.9 190.1 L1325.0 188.3 L1326.1 188.6 L1327.2 189.6 L1328.3 192.9 L1329.4 193.3 L1330.5 189.5 L1331.6 182.1 L1332.7 179.8 L1333.8 191.2 L1334.9 196.9 L1336.0 195.1 L1337.1 195.8 L1338.2 193.5 L1339.3 191.0 L1340.4 193.7 L1341.5 188.8 L1342.6 185.0 L1343.7 181.2 L1344.8 180.2 L1345.9 181.6 L1347.0 180.8 L1348.1 190.5 L1349.2 191.0 L1350.3 190.4 L1351.4 188.8 L1352.5 187.8 L1353.6 189.9 L1354.7 183.4 L1355.8 183.8 L1356.9 188.5 L1358.0 191.1 L1359.1 199.0 L1360.2 204.1 L1361.3 195.0 L1362.4 190.4 L1363.5 192.1 L1364.6 197.5 L1365.7 193.3 L1366.8 183.9 L1367.9 185.5 L1369.0 188.4 L1370.1 191.4 L1371.2 187.3 L1372.3 184.3 L1373.4 187.5 L1374.5 192.2 L1375.6 192.4 L1376.7 195.9 L1377.8 193.8 L1378.9 190.3 L1380.0 193.2 L1381.1 190.8 L1382.2 185.3 L1383.3 188.9 L1384.4 188.3 L1385.5 192.7 L1386.6 195.9 L1387.7 192.9 L1388.8 195.0 L1389.9 201.7 L1391.0 199.4 L1392.1 192.1 L1393.2 185.6 L1394.3 191.3 L1395.4 190.5 L1396.5 187.2 L1397.6 188.3 L1398.7 188.9 L1399.8 181.6 L1400.9 185.4 L1402.0 198.2 L1403.1 189.0 L1404.2 185.9 L1405.3 185.7 L1406.4 188.0 L1407.5 184.3 L1408.6 179.1 L1409.7 178.3 L1410.8 179.3 L1411.9 182.7 L1413.0 184.5 L1414.1 187.5 L1415.2 191.7 L1416.3 182.2 L1417.4 185.9 L1418.5 188.3 L1419.6 188.8 L1420.7 190.8 L1421.8 198.8 L1422.9 194.1 L1424.0 197.0 L1425.1 198.8 L1426.2 202.2 L1427.3 199.9 L1428.4 191.0 L1429.5 192.0 L1430.6 191.7 L1431.7 193.0 L1432.8 196.9 L1433.9 197.1 L1435.0 197.5 L1436.1 196.6 L1437.2 201.6 L1438.3 194.1 L1439.4 185.7 L1440.5 182.4 L1441.6 183.1 L1442.7 188.1 L1443.8 193.0 L1444.9 186.9 L1446.0 186.5 L1447.1 189.9 L1448.2 194.5 L1449.3 188.1 L1450.4 182.5 L1451.5 185.6 L1452.6 189.8 L1453.7 188.1 L1454.8 189.5 L1455.9 188.4 L1457.0 185.7 L1458.1 187.2 L1459.2 188.4 L1460.3 189.4 L1461.4 194.4 L1462.5 194.6 L1463.6 190.1 L1464.7 191.6 L1465.8 190.8 L1466.9 195.7 L1468.0 187.0 L1469.1 186.6 L1470.2 185.6 L1471.3 200.3 L1472.4 198.1 L1473.5 185.3 L1474.6 186.3 L1475.7 187.6 L1476.8 187.8 L1477.9 187.4 L1479.0 187.4 L1480.1 192.3 L1481.2 189.0 L1482.3 183.3 L1483.4 187.7 L1484.5 191.7 L1485.6 188.5 L1486.7 185.1 L1487.8 189.2 L1488.9 189.7 L1490.0 186.7 L1491.1 183.6 L1492.2 182.2 L1493.3 187.7 L1494.4 187.0 L1495.5 187.3 L1496.6 196.5 L1497.7 191.1 L1498.8 188.0 L1499.9 190.9 L1501.0 193.1 L1502.1 186.8 L1503.2 183.3 L1504.3 189.0 L1505.4 191.6 L1506.5 188.8 L1507.6 181.2 L1508.7 181.7 L1509.8 188.5 L1510.9 195.8 L1512.0 196.8 L1513.1 193.1 L1514.2 191.2 L1515.3 190.7 L1516.4 194.8 L1517.5 191.0 L1518.6 189.4 L1519.7 193.2 L1520.8 180.8 L1521.9 183.2 L1523.0 187.8 L1524.1 195.6 L1525.2 194.3 L1526.3 185.0 L1527.4 187.2 L1528.5 197.4 L1529.6 186.7 L1530.7 184.0 L1531.8 187.2 L1532.9 192.9 L1534.0 190.4 L1535.1 191.0 L1536.2 185.5 L1537.3 180.0 L1538.4 183.3 L1539.5 185.2 L1540.6 191.4 L1541.7 194.8 L1542.8 189.7 L1543.9 183.3 L1545.0 182.5 L1546.1 188.3 L1547.2 189.9 L1548.3 194.0 L1549.4 198.2 L1550.5 191.7 L1551.6 189.3 L1552.7 192.0 L1553.8 193.7 L1554.9 197.9 L1556.0 190.1 L1557.1 183.6 L1558.2 187.2 L1559.3 186.5 L1560.4 187.8 L1561.5 192.3 L1562.6 191.1 L1563.7 189.3 L1564.8 178.0 L1565.9 186.7 L1567.0 196.3 L1568.1 196.3 L1569.2 184.9 L1570.3 184.9 L1571.4 189.5 L1572.5 196.6 L1573.6 196.1 L1574.7 195.2 L1575.8 187.9 L1576.9 188.5 L1578.0 181.9 L1579.1 186.0 L1580.2 189.6 L1581.3 187.8 L1582.4 198.8 L1583.5 197.3 L1584.6 192.2 L1585.7 185.0 L1586.8 184.2 L1587.9 190.1 L1589.0 198.9 L1590.1 197.0 L1591.2 194.9 L1592.3 187.6 L1593.4 190.4 L1594.5 186.4 L1595.6 181.6 L1596.7 187.3 L1597.8 187.9 L1598.9 191.4 L1600.0 190.7 L1601.1 190.1 L1602.2 190.3 L1603.3 190.4 L1604.4 189.4 L1605.5 183.6 L1606.6 190.5 L1607.7 190.6 L1608.8 194.6 L1609.9 199.7 L1611.0 189.2 L1612.1 190.6 L1613.2 197.7 L1614.3 198.2 L1615.4 198.6 L1616.5 189.6 L1617.6 182.0 L1618.7 185.3 L1619.8 197.7 L1620.9 200.0 L1622.0 189.1 L1623.1 183.3 L1624.2 187.7 L1625.3 188.8 L1626.4 196.6 L1627.5 193.4 L1628.6 190.2 L1629.7 192.7 L1630.8 191.8 L1631.9 189.3 L1633.0 194.4 L1634.1 195.3 L1635.2 188.8 L1636.3 190.4 L1637.4 194.7 L1638.5 191.0 L1639.6 192.1 L1640.7 188.6 L1641.8 190.6 L1642.9 193.1 L1644.0 194.3 L1645.1 191.0 L1646.2 188.0 L1647.3 182.8 L1648.4 190.5 L1649.5 194.3 L1650.6 186.2 L1651.7 194.9 L1652.8 187.0 L1653.9 190.1 L1655.0 185.4 L1656.1 188.5 L1657.2 188.2 L1658.3 189.3 L1659.4 190.0 L1660.5 188.8 L1661.6 191.6 L1662.7 190.0 L1663.8 195.1 L1664.9 195.2 L1666.0 193.2 L1667.1 189.4 L1668.2 185.4 L1669.3 192.7 L1670.4 195.5 L1671.5 195.7 L1672.6 191.7 L1673.7 188.6 L1674.8 192.7 L1675.9 192.6 L1677.0 192.4 L1678.1 192.6 L1679.2 197.5 L1680.3 188.6 L1681.4 186.4 L1682.5 192.9 L1683.6 192.9 L1684.7 193.1 L1685.8 186.0 L1686.9 182.5 L1688.0 177.0 L1689.1 188.7 L1690.2 195.0 L1691.3 195.4 L1692.4 196.5 L1693.5 191.0 L1694.6 188.1 L1695.7 186.3 L1696.8 188.6 L1697.9 190.7 L1699.0 185.3 L1700.1 186.0 L1701.2 188.8 L1702.3 196.8 L1703.4 197.9 L1704.5 196.6 L1705.6 197.8 L1706.7 200.9 L1707.8 190.3 L1708.9 190.6 L1710.0 187.8 L1711.1 185.6 L1712.2 183.6 L1713.3 186.9 L1714.4 190.4 L1715.5 194.9 L1716.6 190.8 L1717.7 187.1 L1718.8 199.1 L1719.9 198.1 L1721.0 191.1 L1722.1 187.9 L1723.2 197.0 L1724.3 197.3 L1725.4 190.3 L1726.5 181.8 L1727.6 194.5 L1728.7 195.6 L1729.8 192.8 L1730.9 196.6 L1732.0 193.7 L1733.1 193.3 L1734.2 195.8 L1735.3 192.2 L1736.4 187.8 L1737.5 193.6 L1738.6 198.8 L1739.7 199.3 L1740.8 194.6 L1741.9 191.0 L1743.0 193.5 L1744.1 190.5 L1745.2 184.5 L1746.3 196.9 L1747.4 200.7 L1748.5 196.0 L1749.6 195.5 L1750.7 191.6 L1751.8 188.9 L1752.9 192.2 L1754.0 194.8 L1755.1 192.4 L1756.2 192.7 L1757.3 196.0 L1758.4 197.1 L1759.5 193.6 L1760.6 197.2 L1761.7 199.7 L1762.8 194.4 L1763.9 197.6 L1765.0 197.7 L1766.1 194.7 L1767.2 198.4 L1768.3 199.1 L1769.4 202.7 L1770.5 203.6 L1771.6 194.9 L1772.7 190.3 L1773.8 196.5 L1774.9 190.8 L1776.0 188.1 L1777.1 189.9 L1778.2 200.6 L1779.3 199.2 L1780.4 191.1 L1781.5 194.8 L1782.6 195.7 L1783.7 192.8 L1784.8 193.7 L1785.9 198.6 L1787.0 197.5 L1788.1 193.4 L1789.2 195.4 L1790.3 197.4 L1791.4 190.3 L1792.5 191.2 L1793.6 197.1 L1794.7 198.0 L1795.8 196.1 L1796.9 205.4 L1798.0 199.8 L1799.1 199.7 L1800.2 198.9 L1801.3 192.6 L1802.4 189.3 L1803.5 182.5 L1804.6 192.6 L1805.7 197.1 L1806.8 200.9 L1807.9 195.0 L1809.0 197.4 L1810.1 194.4 L1811.2 189.1 L1812.3 188.5 L1813.4 191.0 L1814.5 190.9 L1815.6 198.2 L1816.7 203.5 L1817.8 203.7 L1818.9 193.7 L1820.0 187.9 L1821.1 196.0" fill="none" stroke="#ececf4" stroke-width="1.7" stroke-linejoin="round"/><line x1="1398.5" y1="29.0" x2="1398.5" y2="251.4" stroke="#ffff50" stroke-width="1.2"/><line x1="973.3" y1="29.0" x2="973.3" y2="251.4" stroke="#888" stroke-width="1"/><line x1="974.9" y1="29.0" x2="974.9" y2="251.4" stroke="#c02828" stroke-width="2"/></svg>
<div class="t" style="left:919.13px;top:18.83px;font-size:20.40px;color:#f4f4f4;">40.0</div>
<div class="t" style="left:919.13px;top:63.93px;font-size:20.40px;color:#f4f4f4;">20.0</div>
<div class="t" style="left:930.48px;top:107.93px;font-size:20.40px;color:#f4f4f4;">0.0</div>
<div class="t" style="left:912.34px;top:152.93px;font-size:20.40px;color:#f4f4f4;">-20.0</div>
<div class="t" style="left:912.34px;top:197.83px;font-size:20.40px;color:#f4f4f4;">-40.0</div>
<div class="t" style="left:912.34px;top:241.03px;font-size:20.40px;color:#f4f4f4;">-60.0</div>
<div class="t" style="left:1014.49px;top:259.46px;font-size:20.60px;color:#f4f4f4;">207.2</div>
<div class="t" style="left:1097.07px;top:259.46px;font-size:20.60px;color:#f4f4f4;">207.4</div>
<div class="t" style="left:1179.96px;top:259.46px;font-size:20.60px;color:#f4f4f4;">207.6</div>
<div class="t" style="left:1262.75px;top:259.46px;font-size:20.60px;color:#f4f4f4;">207.8</div>
<div class="t" style="left:1354.13px;top:259.46px;font-size:20.60px;color:#f4f4f4;">208</div>
<div class="t" style="left:1428.44px;top:259.46px;font-size:20.60px;color:#f4f4f4;">208.2</div>
<div class="t" style="left:1511.02px;top:259.46px;font-size:20.60px;color:#f4f4f4;">208.4</div>
<div class="t" style="left:1593.91px;top:259.46px;font-size:20.60px;color:#f4f4f4;">208.6</div>
<div class="t" style="left:1676.70px;top:259.46px;font-size:20.60px;color:#f4f4f4;">208.8</div>
<div class="t" style="left:1768.19px;top:259.46px;font-size:20.60px;color:#f4f4f4;">209</div>
<div class="t" style="left:1305.80px;top:288.34px;font-size:23.70px;color:#f4f4f4;">Frequency (MHz)</div>
<div class="t" style="left:789.03px;top:129.26px;font-size:23.42px;color:#f4f4f4;transform-origin:80.37px 11.44px;transform:rotate(-90deg);">Magnitude (dB)</div>
<div class="t" style="left:8.21px;top:357.34px;font-size:23.69px;color:#f4f4f4;font-style:italic;transform:scaleX(0.9732);">DAB+</div>
<div class="r" style="left:93.5px;top:349.4px;width:87px;height:30px;border:1px solid #8a8a8a;border-radius:4px;background:#262626;"></div>
<div class="t" style="left:95.18px;top:354.72px;font-size:21.00px;color:#f4f4f4;transform:scaleX(0.9714);">9D</div>
<svg class="r" style="left:150px;top:360px" width="17" height="10" viewBox="0 0 17 10"><path d="M0.5 0.8 L16 0.8 L8.25 9.6 Z" fill="#f4f4f4"/></svg>
<div class="t" style="left:221.41px;top:353.96px;font-size:24.86px;color:#f4f4f4;transform:scaleX(0.8990);">EId: 0</div>
<div class="t" style="left:338.80px;top:354.35px;font-size:24.16px;color:#f4f4f4;transform:scaleX(0.9698);">0001-01-01  00:00:00 Z</div>
<div class="r" style="left:838px;top:349.3px;width:36px;height:30.5px;border:1px solid #959595;border-radius:4px;background:#262626;"></div>
<svg class="r" style="left:848px;top:360px" width="16" height="10" viewBox="0 0 16 10"><path d="M0.5 0.8 L15.5 0.8 L8 9.5 Z" fill="#f4f4f4"/></svg>
<div class="r" style="left:911px;top:349px;width:34px;height:34px;border-radius:50%;background:#1f5b8c;"></div>
<div class="r" style="left:921.5px;top:359.5px;width:13px;height:13px;border-radius:50%;background:#ff0000;"></div>
<div class="r" style="left:963.5px;top:349px;width:34px;height:34px;border-radius:50%;background:#1c3c58;"></div>
<div class="r" style="left:973.5px;top:359px;width:14px;height:14px;background:#0a0a0a;"></div>
<div class="r" style="left:1790.4px;top:347.5px;width:60px;height:30px;border:1px solid #8a8a8a;border-radius:4px;background:#262626;"></div>
<div class="t" style="left:1792.03px;top:353.50px;font-size:20.20px;color:#f4f4f4;transform:scaleX(0.9108);">DAB</div>
<div class="t" style="left:-0.33px;top:404.00px;font-size:30.71px;color:#f2f22a;transform:scaleX(0.9492);">No Service</div>
<div class="t" style="left:299.84px;top:404.41px;font-size:30.00px;color:#f4f4f4;transform:scaleX(0.9689);">Service Quality</div>
<div class="t" style="left:307.72px;top:471.84px;font-size:20.86px;color:#f4f4f4;transform:scaleX(0.9325);">SNR (dB)</div>
<div class="r" style="left:488px;top:461.5px;width:60px;height:37px;background:#7f7f7f;"></div>
<div class="t" style="left:513.00px;top:472.07px;font-size:18.34px;color:#f0f0f0;transform:scaleX(1.0903);font-family:"Liberation Serif",serif;">0</div>
<div class="t" style="left:306.92px;top:518.14px;font-size:20.86px;color:#f4f4f4;transform:scaleX(0.9476);">FIC (ok %)</div>
<div class="r" style="left:488px;top:507.8px;width:60px;height:37px;background:#7f7f7f;"></div>
<div class="t" style="left:513.00px;top:518.37px;font-size:18.34px;color:#f0f0f0;transform:scaleX(1.0903);font-family:"Liberation Serif",serif;">0</div>
<div class="t" style="left:306.93px;top:564.44px;font-size:20.86px;color:#f4f4f4;transform:scaleX(0.9398);">RS (ok %)</div>
<div class="r" style="left:488px;top:554.1px;width:60px;height:37px;background:#7f7f7f;"></div>
<div class="t" style="left:306.80px;top:610.74px;font-size:20.86px;color:#f4f4f4;transform:scaleX(1.0202);">Null Symbol</div>
<div class="r" style="left:488px;top:600.4px;width:60px;height:37px;background:#7f7f7f;"></div>
<div class="t" style="left:307.68px;top:657.04px;font-size:20.86px;color:#f4f4f4;transform:scaleX(0.9840);">SymbolTime (ms)</div>
<div class="r" style="left:488px;top:646.7px;width:60px;height:37px;background:#7f7f7f;"></div>
<div class="t" style="left:513.00px;top:657.27px;font-size:18.34px;color:#f0f0f0;transform:scaleX(1.0903);font-family:"Liberation Serif",serif;">0</div>
<div class="t" style="left:306.87px;top:703.34px;font-size:20.86px;color:#f4f4f4;transform:scaleX(0.9744);">FrameTime (ms)</div>
<div class="r" style="left:488px;top:693.0px;width:60px;height:37px;background:#7f7f7f;"></div>
<div class="t" style="left:513.00px;top:703.57px;font-size:18.34px;color:#f0f0f0;transform:scaleX(1.0903);font-family:"Liberation Serif",serif;">0</div>
<div style="position:absolute;left:0;top:0;width:1844px;height:912px;clip-path:polygon(569px 394px,930px 394px,930px 909px,569px 909px);">
<div class="r" style="left:581px;top:405px;width:157.5px;height:40px;background:#888888;border:1px solid #9aa0a8;border-bottom:none;border-radius:4px 14px 0 0;"></div>
<div class="r" style="left:741px;top:405px;width:217px;height:40px;background:#888888;border:1px solid #9aa0a8;border-bottom:none;border-radius:4px 14px 0 0;"></div>
<div class="r" style="left:581px;top:455px;width:121px;height:39px;background:#888888;border:1px solid #9aa0a8;border-bottom:none;border-radius:4px 14px 0 0;"></div>
<div class="r" style="left:704.3px;top:455px;width:96.20000000000005px;height:39px;background:#1b5887;border:1px solid #3a6a98;border-bottom:none;border-radius:4px 14px 0 0;"></div>
<div class="r" style="left:802.7px;top:455px;width:155.29999999999995px;height:39px;background:#888888;border:1px solid #9aa0a8;border-bottom:none;border-radius:4px 14px 0 0;"></div>
<div class="t" style="left:639.50px;top:415.72px;font-size:25.73px;color:#e2e2e2;transform:scaleX(0.8354);">AAC</div>
<div class="t" style="left:795.95px;top:416.10px;font-size:25.29px;color:#e2e2e2;transform:scaleX(1.0355);">Options</div>
<div class="t" style="left:616.56px;top:465.30px;font-size:25.29px;color:#e2e2e2;transform:scaleX(0.9324);">Sync</div>
<div class="t" style="left:739.48px;top:464.92px;font-size:25.73px;color:#ffffff;transform:scaleX(1.0097);">TII</div>
<div class="t" style="left:840.00px;top:465.30px;font-size:25.29px;color:#e2e2e2;transform:scaleX(1.0289);">Audio</div>
<div class="r" style="left:628.6px;top:517.4px;width:0;height:0;"></div>
<div class="r" style="left:621.6px;top:510.4px;width:14px;height:14px;border-radius:50%;background:#ff0000;"></div>
<div class="r" style="left:665.4px;top:510.6px;width:13px;height:13px;background:#102a48;"></div>
<div class="r" style="left:592px;top:539px;width:340px;height:1.3px;background:#9ab0c4;"></div>
<div class="t" style="left:590.19px;top:568.21px;font-size:22.91px;color:#f4f4f4;transform:scaleX(0.9897);">Pattern</div>
<div class="t" style="left:691.13px;top:568.21px;font-size:22.91px;color:#f4f4f4;transform:scaleX(1.0209);">MainId</div>
<div class="t" style="left:790.70px;top:568.21px;font-size:22.91px;color:#f4f4f4;transform:scaleX(0.9782);">SubId</div>
<div class="t" style="left:878.12px;top:568.21px;font-size:22.91px;color:#f4f4f4;transform:scaleX(0.9611);">Stren</div>
<div class="r" style="left:592px;top:593px;width:340px;height:1.3px;background:#9ab0c4;"></div>
</div>
<div class="r" style="left:930px;top:394px;width:8px;height:515px;background:#eef0f0;"></div>
<div class="t" style="left:1252.63px;top:398.74px;font-size:22.29px;color:#f4f4f4;transform:scaleX(0.9595);">Channel Impulse Response (CIR)</div>
<svg class="r" style="left:1834px;top:400px" width="12" height="20" viewBox="0 0 12 20"><path d="M1.2 1.2 L20 1.2 M1.2 1.2 L11 21" fill="none" stroke="#c8d0d8" stroke-width="1.3"/></svg>
<div class="r" style="left:953.0px;top:441.4px;width:20px;height:20px;border-radius:50%;background:#e0e0e0;"></div>
<div class="t" style="left:977.85px;top:444.58px;font-size:17.86px;color:#f4f4f4;transform:scaleX(0.9457);">Freeze</div>
<div class="r" style="left:1059.4px;top:441.4px;width:20px;height:20px;border-radius:50%;background:#e0e0e0;"></div>
<div class="t" style="left:1085.21px;top:444.58px;font-size:17.86px;color:#f4f4f4;">Gradient</div>
<div class="t" style="left:959.98px;top:505.12px;font-size:18.29px;color:#f4f4f4;transform:scaleX(0.9863);">Smoothing Level</div>
<div class="r" style="left:963.15px;top:531px;width:1.8px;height:6.600000000000023px;background:#b4b4b4;"></div>
<div class="r" style="left:982.82px;top:532.5px;width:1.8px;height:5.100000000000023px;background:#b4b4b4;"></div>
<div class="r" style="left:1002.49px;top:532.5px;width:1.8px;height:5.100000000000023px;background:#b4b4b4;"></div>
<div class="r" style="left:1022.16px;top:532.5px;width:1.8px;height:5.100000000000023px;background:#b4b4b4;"></div>
<div class="r" style="left:1041.83px;top:532.5px;width:1.8px;height:5.100000000000023px;background:#b4b4b4;"></div>
<div class="r" style="left:1061.50px;top:532.5px;width:1.8px;height:5.100000000000023px;background:#b4b4b4;"></div>
<div class="r" style="left:1081.17px;top:532.5px;width:1.8px;height:5.100000000000023px;background:#b4b4b4;"></div>
<div class="r" style="left:1100.84px;top:532.5px;width:1.8px;height:5.100000000000023px;background:#b4b4b4;"></div>
<div class="r" style="left:1120.51px;top:532.5px;width:1.8px;height:5.100000000000023px;background:#b4b4b4;"></div>
<div class="r" style="left:1140.18px;top:532.5px;width:1.8px;height:5.100000000000023px;background:#b4b4b4;"></div>
<div class="r" style="left:1159.85px;top:531px;width:1.8px;height:6.600000000000023px;background:#b4b4b4;"></div>
<div class="r" style="left:952.8px;top:546.9px;width:217.4000000000001px;height:3.5px;border-radius:2px;background:#dcdcdc;"></div>
<div class="r" style="left:992.3px;top:538.6px;width:20px;height:20px;border-radius:50%;background:linear-gradient(180deg, #eeeeee 0%, #c4c4c4 35%, #8a8a8a 70%, #4a4a4a 100%);box-shadow:0 0 1px rgba(0,0,0,.8);"></div>
<div class="t" style="left:960.15px;top:588.19px;font-size:16.43px;color:#f4f4f4;transform:scaleX(1.1067);">Zoom X</div>
<div class="r" style="left:955px;top:622.0px;width:215.20000000000005px;height:3.5px;border-radius:2px;background:#dcdcdc;"></div>
<div class="r" style="left:953.7px;top:613.8px;width:20px;height:20px;border-radius:50%;background:linear-gradient(180deg, #eeeeee 0%, #c4c4c4 35%, #8a8a8a 70%, #4a4a4a 100%);box-shadow:0 0 1px rgba(0,0,0,.8);"></div>
<div class="t" style="left:960.15px;top:663.09px;font-size:16.43px;color:#f4f4f4;transform:scaleX(1.1067);">Zoom Y</div>
<div class="r" style="left:955px;top:696.6px;width:215.20000000000005px;height:3.5px;border-radius:2px;background:#dcdcdc;"></div>
<div class="r" style="left:953.7px;top:688.4px;width:20px;height:20px;border-radius:50%;background:linear-gradient(180deg, #eeeeee 0%, #c4c4c4 35%, #8a8a8a 70%, #4a4a4a 100%);box-shadow:0 0 1px rgba(0,0,0,.8);"></div>
<div class="t" style="left:960.53px;top:738.26px;font-size:16.00px;color:#f4f4f4;transform:scaleX(1.0905);">x-Axis</div>
<div class="r" style="left:970.0px;top:765.9px;width:15px;height:15px;border-radius:50%;background:#f4f4f4;border:1px solid #707070;"></div>
<div class="t" style="left:996.12px;top:766.28px;font-size:18.57px;color:#f4f4f4;transform:scaleX(0.9175);">Samples</div>
<div class="r" style="left:970.0px;top:795.6px;width:15px;height:15px;border-radius:50%;background:#f4f4f4;border:1px solid #707070;"></div>
<div class="r" style="left:974.0px;top:799.6px;width:9px;height:9px;border-radius:50%;background:#333;"></div>
<div class="t" style="left:995.38px;top:795.88px;font-size:18.57px;color:#f4f4f4;transform:scaleX(0.9544);">Distance</div>
<div class="r" style="left:970.0px;top:825.4px;width:15px;height:15px;border-radius:50%;background:#f4f4f4;border:1px solid #707070;"></div>
<div class="t" style="left:996.44px;top:825.78px;font-size:18.57px;color:#f4f4f4;transform:scaleX(0.9586);">Time</div>
<svg class="r" style="left:0;top:0" width="1844" height="912" viewBox="0 0 1844 912"><rect x="1343.9" y="453.2" width="95.7" height="353.9" fill="#424242"/><line x1="1310.6" y1="453.2" x2="1835.0" y2="453.2" stroke="rgba(255,255,255,0.52)" stroke-width="1.2"/><line x1="1310.6" y1="524.5" x2="1835.0" y2="524.5" stroke="rgba(255,255,255,0.52)" stroke-width="1.2"/><line x1="1310.6" y1="595.5" x2="1835.0" y2="595.5" stroke="rgba(255,255,255,0.52)" stroke-width="1.2"/><line x1="1310.6" y1="666.5" x2="1835.0" y2="666.5" stroke="rgba(255,255,255,0.52)" stroke-width="1.2"/><line x1="1310.6" y1="737.5" x2="1835.0" y2="737.5" stroke="rgba(255,255,255,0.52)" stroke-width="1.2"/><line x1="1310.6" y1="807.1" x2="1835.0" y2="807.1" stroke="rgba(255,255,255,0.52)" stroke-width="1.2"/><line x1="1334.4" y1="453.2" x2="1334.4" y2="807.1" stroke="rgba(255,255,255,0.52)" stroke-width="1.2"/><line x1="1369.6" y1="453.2" x2="1369.6" y2="807.1" stroke="rgba(255,255,255,0.52)" stroke-width="1.2"/><line x1="1404.7" y1="453.2" x2="1404.7" y2="807.1" stroke="rgba(255,255,255,0.52)" stroke-width="1.2"/><line x1="1475.1" y1="453.2" x2="1475.1" y2="807.1" stroke="rgba(255,255,255,0.52)" stroke-width="1.2"/><line x1="1510.2" y1="453.2" x2="1510.2" y2="807.1" stroke="rgba(255,255,255,0.52)" stroke-width="1.2"/><line x1="1545.4" y1="453.2" x2="1545.4" y2="807.1" stroke="rgba(255,255,255,0.52)" stroke-width="1.2"/><line x1="1580.6" y1="453.2" x2="1580.6" y2="807.1" stroke="rgba(255,255,255,0.52)" stroke-width="1.2"/><line x1="1615.7" y1="453.2" x2="1615.7" y2="807.1" stroke="rgba(255,255,255,0.52)" stroke-width="1.2"/><line x1="1650.9" y1="453.2" x2="1650.9" y2="807.1" stroke="rgba(255,255,255,0.52)" stroke-width="1.2"/><line x1="1686.0" y1="453.2" x2="1686.0" y2="807.1" stroke="rgba(255,255,255,0.52)" stroke-width="1.2"/><line x1="1721.2" y1="453.2" x2="1721.2" y2="807.1" stroke="rgba(255,255,255,0.52)" stroke-width="1.2"/><line x1="1756.4" y1="453.2" x2="1756.4" y2="807.1" stroke="rgba(255,255,255,0.52)" stroke-width="1.2"/><line x1="1791.5" y1="453.2" x2="1791.5" y2="807.1" stroke="rgba(255,255,255,0.52)" stroke-width="1.2"/><line x1="1826.7" y1="453.2" x2="1826.7" y2="807.1" stroke="rgba(255,255,255,0.52)" stroke-width="1.2"/><line x1="1835.0" y1="453.2" x2="1835.0" y2="807.1" stroke="#9a9a9a" stroke-width="1.5"/><path d="M1311.6 772.0 L1312.6 779.3 L1313.7 767.1 L1314.7 806.8 L1315.8 759.1 L1316.8 774.0 L1317.9 778.7 L1318.9 790.8 L1320.0 805.2 L1321.0 800.7 L1322.1 766.1 L1323.1 779.2 L1324.2 772.2 L1325.2 807.1 L1326.3 791.6 L1327.3 769.8 L1328.4 787.3 L1329.4 791.0 L1330.5 791.8 L1331.5 784.3 L1332.6 761.0 L1333.6 797.9 L1334.7 795.3 L1335.7 800.0 L1336.8 806.4 L1337.8 798.7 L1338.9 764.0 L1339.9 799.5 L1341.0 768.6 L1342.0 757.1 L1343.1 751.4 L1344.1 797.7 L1345.2 805.6 L1346.2 803.6 L1347.3 792.3 L1348.3 772.5 L1349.4 784.6 L1350.4 791.6 L1351.5 797.7 L1352.5 779.2 L1353.6 802.9 L1354.6 805.8 L1355.7 772.5 L1356.7 798.6 L1357.8 775.3 L1358.8 799.4 L1359.9 799.7 L1360.9 784.4 L1362.0 794.3 L1363.0 769.5 L1364.1 781.6 L1365.1 788.6 L1366.2 779.3 L1367.2 806.4 L1368.3 803.2 L1369.3 777.2 L1370.4 767.5 L1371.4 787.0 L1372.5 797.7 L1373.5 804.4 L1374.6 787.1 L1375.6 768.9 L1376.7 757.9 L1377.7 793.1 L1378.8 778.2 L1379.8 796.3 L1380.9 783.0 L1381.9 771.0 L1383.0 777.3 L1384.0 805.8 L1385.1 765.4 L1386.1 797.9 L1387.2 765.7 L1388.2 785.5 L1389.3 783.6 L1390.3 800.6 L1391.4 765.9 L1392.4 800.2 L1393.5 770.8 L1394.5 807.0 L1395.6 789.3 L1396.6 794.1 L1397.7 770.9 L1398.7 798.4 L1399.8 767.2 L1400.8 798.3 L1401.9 762.0 L1402.9 770.1 L1404.0 776.5 L1405.0 804.0 L1406.1 759.4 L1407.1 784.3 L1408.2 767.5 L1409.2 780.0 L1410.3 770.2 L1411.3 787.3 L1412.4 771.4 L1413.4 806.8 L1414.5 780.0 L1415.5 802.5 L1416.6 771.6 L1417.6 793.7 L1418.7 801.5 L1419.7 799.4 L1420.8 784.4 L1421.8 797.2 L1422.9 773.4 L1423.9 766.9 L1425.0 787.9 L1426.0 805.2 L1427.1 772.5 L1428.1 805.7 L1429.2 784.8 L1430.2 771.0 L1431.3 781.0 L1432.3 786.5 L1433.4 795.5 L1434.4 789.9 L1435.5 758.2 L1436.5 798.3 L1437.6 806.8 L1438.6 789.9 L1439.7 795.6 L1440.7 774.5 L1441.8 780.4 L1442.8 800.3 L1443.9 754.9 L1444.9 773.4 L1446.0 788.9 L1446.9 739.6 L1448.1 785.8 L1449.1 792.9 L1450.2 778.3 L1451.2 787.4 L1452.3 787.1 L1453.3 768.5 L1454.4 788.1 L1455.4 780.0 L1456.5 788.5 L1457.5 769.4 L1458.6 772.6 L1459.6 786.4 L1460.7 767.0 L1461.7 781.0 L1462.8 775.8 L1463.8 800.1 L1464.9 778.9 L1465.9 781.7 L1467.0 802.9 L1468.0 794.4 L1469.1 761.3 L1470.1 807.0 L1471.2 780.6 L1472.2 783.5 L1473.3 778.1 L1474.3 797.0 L1475.1 751.4 L1476.4 800.1 L1477.5 800.6 L1478.5 784.1 L1479.6 787.5 L1480.6 773.5 L1481.7 778.3 L1482.7 792.7 L1483.8 794.8 L1484.8 778.5 L1485.9 790.5 L1486.9 779.5 L1488.0 803.9 L1489.0 770.0 L1490.1 768.7 L1491.1 777.0 L1492.2 771.0 L1493.2 783.3 L1494.3 787.2 L1495.3 804.4 L1496.4 781.2 L1497.4 787.4 L1498.5 797.6 L1499.5 806.1 L1500.6 774.0 L1501.6 775.2 L1502.7 780.4 L1503.7 788.4 L1504.8 759.3 L1505.8 806.4 L1506.9 795.0 L1507.9 792.4 L1509.0 774.9 L1510.0 801.2 L1511.1 789.2 L1512.1 791.9 L1513.2 790.2 L1514.2 782.1 L1515.3 768.2 L1516.3 805.9 L1517.4 798.8 L1518.4 788.6 L1519.5 761.7 L1520.5 799.2 L1521.6 803.5 L1522.6 806.5 L1523.7 758.8 L1524.7 802.4 L1525.8 758.0 L1526.8 778.1 L1527.9 771.9 L1528.9 802.1 L1530.0 772.4 L1531.0 797.0 L1532.1 763.5 L1533.1 778.9 L1534.2 762.7 L1535.2 788.7 L1536.3 767.1 L1537.3 802.1 L1538.4 802.7 L1539.4 793.4 L1540.5 806.9 L1541.5 774.6 L1542.6 780.6 L1543.6 805.6 L1544.7 794.5 L1545.7 797.0 L1546.8 794.9 L1547.8 800.7 L1548.9 787.4 L1549.9 777.2 L1551.0 783.4 L1552.0 784.4 L1553.1 778.6 L1554.1 805.2 L1555.2 787.2 L1556.2 782.5 L1557.3 788.0 L1558.3 806.0 L1559.4 758.0 L1560.4 799.6 L1561.5 787.6 L1562.5 783.0 L1563.6 789.9 L1564.6 772.0 L1565.7 780.5 L1566.7 807.1 L1567.8 765.5 L1568.8 806.6 L1569.9 757.4 L1570.9 798.3 L1572.0 800.2 L1573.0 793.0 L1574.1 801.5 L1575.1 806.5 L1576.2 801.0 L1577.2 796.2 L1578.3 784.8 L1579.3 803.6 L1580.4 781.8 L1581.4 805.9 L1582.5 797.7 L1583.5 773.0 L1584.6 762.5 L1585.6 807.0 L1586.7 777.9 L1587.7 797.3 L1588.8 767.7 L1589.8 799.8 L1590.9 763.7 L1591.9 805.2 L1593.0 799.0 L1594.0 778.1 L1595.1 796.3 L1596.1 801.8 L1597.2 780.6 L1598.2 801.7 L1599.3 768.7 L1600.3 803.1 L1601.4 783.1 L1602.4 795.7 L1603.5 766.6 L1604.5 774.3 L1605.6 766.3 L1606.6 794.9 L1607.7 770.6 L1608.7 782.6 L1609.8 788.5 L1610.8 797.1 L1611.9 800.6 L1612.9 801.2 L1614.0 787.5 L1615.0 780.8 L1616.1 803.7 L1617.1 804.9 L1618.2 762.4 L1619.2 787.9 L1620.3 780.5 L1621.3 788.8 L1622.4 763.6 L1623.4 805.7 L1624.5 793.8 L1625.5 794.7 L1626.6 764.9 L1627.6 799.4 L1628.7 779.1 L1629.7 794.9 L1630.8 759.4 L1631.8 770.4 L1632.9 798.0 L1633.9 795.8 L1635.0 751.4 L1636.0 793.3 L1637.1 782.2 L1638.1 800.8 L1639.2 774.6 L1640.2 781.5 L1641.3 784.2 L1642.3 769.8 L1643.4 762.7 L1644.4 796.5 L1645.5 763.5 L1646.5 806.7 L1647.6 798.3 L1648.6 774.1 L1649.7 764.8 L1650.7 784.7 L1651.8 772.0 L1652.8 788.4 L1653.9 773.5 L1654.9 796.9 L1656.0 803.8 L1657.0 797.1 L1658.1 768.6 L1659.1 769.8 L1660.2 759.9 L1661.2 785.2 L1662.3 764.8 L1663.3 788.7 L1664.4 776.3 L1665.4 806.0 L1666.5 784.0 L1667.5 781.1 L1668.6 786.4 L1669.6 800.8 L1670.7 800.1 L1671.7 785.3 L1672.8 760.9 L1673.8 777.2 L1674.9 772.5 L1675.9 791.9 L1677.0 790.0 L1678.0 790.8 L1679.1 806.5 L1680.1 803.7 L1681.2 760.8 L1682.2 787.8 L1683.3 797.6 L1684.3 790.4 L1685.4 783.1 L1686.4 802.7 L1687.5 788.5 L1688.5 774.2 L1689.6 771.5 L1690.6 802.4 L1691.7 774.4 L1692.7 775.2 L1693.8 781.1 L1694.8 791.4 L1695.9 786.7 L1696.9 788.1 L1698.0 790.8 L1699.0 790.0 L1700.1 793.0 L1701.1 788.6 L1702.2 769.2 L1703.2 806.3 L1704.3 763.3 L1705.3 799.4 L1706.4 771.0 L1707.4 802.2 L1708.5 763.1 L1709.5 805.6 L1710.6 794.6 L1711.6 804.4 L1712.7 797.9 L1713.7 782.2 L1714.8 764.6 L1715.8 772.8 L1716.9 771.9 L1717.9 805.5 L1719.0 800.7 L1720.0 797.4 L1721.1 769.6 L1722.1 805.9 L1723.2 775.4 L1724.2 805.2 L1725.3 783.1 L1726.3 792.8 L1727.4 759.1 L1728.4 781.0 L1729.5 787.0 L1730.5 793.4 L1731.6 767.2 L1732.6 797.1 L1733.7 777.4 L1734.7 779.6 L1735.8 787.0 L1736.8 776.7 L1737.9 801.8 L1738.9 802.0 L1740.0 800.0 L1741.0 805.7 L1742.1 757.6 L1743.1 797.0 L1744.2 798.7 L1745.2 765.2 L1746.3 779.4 L1747.3 794.3 L1748.4 776.6 L1749.4 802.5 L1750.5 779.9 L1751.5 805.9 L1752.6 758.7 L1753.6 792.3 L1754.7 782.2 L1755.7 795.2 L1756.8 760.7 L1757.8 786.4 L1758.9 765.9 L1759.9 775.4 L1761.0 760.2 L1762.0 768.9 L1763.1 761.1 L1764.1 780.0 L1765.2 758.0 L1766.2 802.6 L1767.3 788.3 L1768.3 800.4 L1769.4 796.7 L1770.4 794.3 L1771.5 782.8 L1772.5 774.8 L1773.6 804.6 L1774.6 770.9 L1775.7 795.9 L1776.7 773.0 L1777.8 803.4 L1778.8 795.4 L1779.9 766.6 L1780.9 780.3 L1782.0 776.5 L1783.0 783.8 L1784.1 797.5 L1785.1 797.4 L1786.2 778.3 L1787.2 770.6 L1788.3 774.3 L1789.3 790.7 L1790.4 796.0 L1791.4 770.2 L1792.5 781.0 L1793.5 787.9 L1794.6 801.3 L1795.6 806.7 L1796.7 779.3 L1797.7 794.6 L1798.8 759.8 L1799.8 791.4 L1800.9 759.4 L1801.9 769.5 L1803.0 794.0 L1804.0 806.0 L1805.1 767.3 L1806.1 796.9 L1807.2 786.8 L1808.2 777.6 L1809.3 784.2 L1810.3 789.8 L1811.4 779.4 L1812.4 805.8 L1813.5 795.4 L1814.5 801.2 L1815.6 765.4 L1816.6 801.2 L1817.7 771.8 L1818.7 787.1 L1819.8 788.7 L1820.8 795.0 L1821.9 793.4 L1822.9 806.5 L1824.0 773.9 L1825.0 777.9 L1826.1 751.7 L1827.1 805.2 L1828.2 772.5 L1829.2 802.5 L1830.3 797.5 L1831.3 784.6 L1832.4 800.5 L1833.4 786.2" fill="none" stroke="#ececec" stroke-width="1.35" stroke-linejoin="miter"/><line x1="1439.9" y1="453.2" x2="1439.9" y2="807.1" stroke="#d8d830" stroke-width="1.2" stroke-dasharray="2 1.5"/><line x1="1439.9" y1="644" x2="1439.9" y2="807.1" stroke="#f0f070" stroke-width="1.3"/><line x1="1475.1" y1="692" x2="1475.1" y2="760" stroke="#f0f0f0" stroke-width="2"/><circle cx="1439.9" cy="644.1" r="6" fill="#ffff00"/><circle cx="1475.1" cy="691.9" r="6" fill="#e80000"/><line x1="1310.6" y1="453.2" x2="1310.6" y2="807.1" stroke="#c03030" stroke-width="1.6"/></svg>
<div class="t" style="left:1253.61px;top:444.29px;font-size:20.10px;color:#f4f4f4;">-10.0</div>
<div class="t" style="left:1253.61px;top:515.59px;font-size:20.10px;color:#f4f4f4;">-20.0</div>
<div class="t" style="left:1253.61px;top:586.59px;font-size:20.10px;color:#f4f4f4;">-30.0</div>
<div class="t" style="left:1253.61px;top:657.59px;font-size:20.10px;color:#f4f4f4;">-40.0</div>
<div class="t" style="left:1253.61px;top:728.59px;font-size:20.10px;color:#f4f4f4;">-50.0</div>
<div class="t" style="left:1253.61px;top:798.19px;font-size:20.10px;color:#f4f4f4;">-60.0</div>
<div class="t" style="left:1324.05px;top:817.30px;font-size:14.30px;color:#f4f4f4;">-60</div>
<div class="t" style="left:1359.21px;top:837.30px;font-size:14.30px;color:#f4f4f4;">-40</div>
<div class="t" style="left:1394.37px;top:817.30px;font-size:14.30px;color:#f4f4f4;">-20</div>
<div class="t" style="left:1435.97px;top:837.30px;font-size:14.30px;color:#f4f4f4;">0</div>
<div class="t" style="left:1467.01px;top:817.30px;font-size:14.30px;color:#f4f4f4;">20</div>
<div class="t" style="left:1502.39px;top:837.30px;font-size:14.30px;color:#f4f4f4;">40</div>
<div class="t" style="left:1537.34px;top:817.30px;font-size:14.30px;color:#f4f4f4;">60</div>
<div class="t" style="left:1572.58px;top:837.30px;font-size:14.30px;color:#f4f4f4;">80</div>
<div class="t" style="left:1603.55px;top:817.30px;font-size:14.30px;color:#f4f4f4;">100</div>
<div class="t" style="left:1638.71px;top:837.30px;font-size:14.30px;color:#f4f4f4;">120</div>
<div class="t" style="left:1673.88px;top:817.30px;font-size:14.30px;color:#f4f4f4;">140</div>
<div class="t" style="left:1709.04px;top:837.30px;font-size:14.30px;color:#f4f4f4;">160</div>
<div class="t" style="left:1744.20px;top:817.30px;font-size:14.30px;color:#f4f4f4;">180</div>
<div class="t" style="left:1779.51px;top:837.30px;font-size:14.30px;color:#f4f4f4;">200</div>
<div class="t" style="left:1814.68px;top:817.30px;font-size:14.30px;color:#f4f4f4;">220</div>
<div class="t" style="left:1461.89px;top:860.39px;font-size:20.10px;color:#f4f4f4;">Distance Difference (km)</div>
<div class="t" style="left:1156.36px;top:621.79px;font-size:19.88px;color:#f4f4f4;transform-origin:68.24px 9.71px;transform:rotate(-90deg);">Magnitude (dB)</div>
</body></html>
